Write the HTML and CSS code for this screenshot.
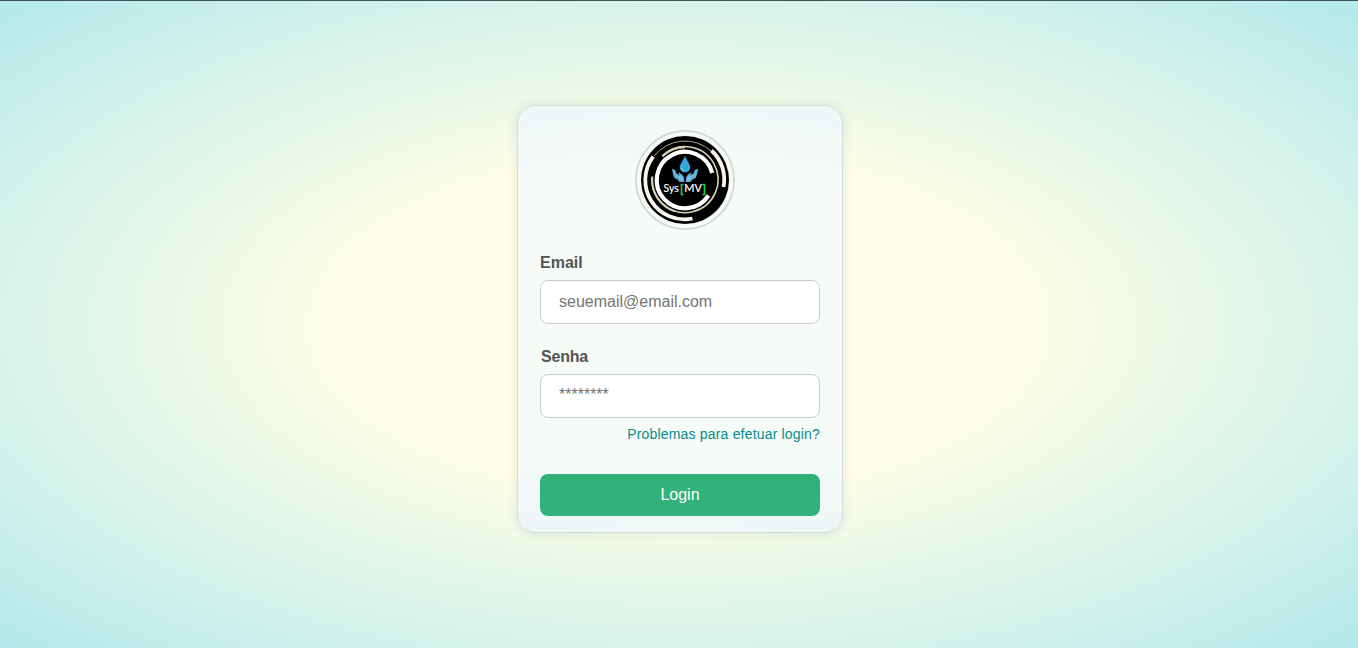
FILE: index.html
```html
<!DOCTYPE html>
<html lang="pt-BR">
<head>
<meta charset="utf-8">
<title>Login</title>
<link rel="stylesheet" href="styles.css">
</head>
<body>
<main class="card">
  <div class="logo">
    <svg class="logo-art" viewBox="0 0 88 88" role="img" aria-label="Sys[MV]">
      <circle cx="44" cy="44" r="44" fill="#000"/>
      <g fill="none">
        <path d="M13.200 20 A39 39 0 0 1 70 15" stroke="#a8a48c" stroke-width="1"/>
        <path d="M21 20 A33 33 0 1 1 11.100 42" stroke="#d8d2b4" stroke-width="1.600"/>
        <path d="M11.300 40.500 A33 33 0 0 0 34 75.400" stroke="#d8d2b4" stroke-width="2"/>
        <path d="M21.500 20.200 A33 33 0 0 1 44 11.200" stroke="#d8d2b4" stroke-width="2"/>
        <path d="M12.200 20.500 A39.200 39.200 0 0 0 51.500 82.500" stroke="#f7f4ea" stroke-width="3.800"/>
        <path d="M70.500 14.500 A39.200 39.200 0 0 1 82.500 51" stroke="#f7f4ea" stroke-width="3.800"/>
        <path d="M71.200 37 A28.200 28.200 0 1 0 67.500 59.500" stroke="#fff" stroke-width="4.200"/>
      </g>
      <path d="M44 19.800 C42.500 24.500 38.800 28 38.800 31.500 A5.200 5.100 0 0 0 49.200 31.500 C49.200 28 45.500 24.500 44 19.800Z" fill="#35a5de"/>
      <path d="M40.600 31.500 Q41 34 43 34.900" fill="none" stroke="#b8e4f7" stroke-width=".8"/>
      <g id="hand">
        <path d="M31 32.800 L34.200 34 L35.700 38 L38.800 40.200 Q36.500 37.200 37.700 36.600 Q41.800 38.200 42.900 41.200 L43.200 46 L38.700 46 Q37 43 33.500 42 Q31.500 38.500 31 32.800Z" fill="#5fb3df"/>
        <path d="M35.500 38.200 L39.500 41.200 L41 44.200" fill="none" stroke="#b5d5e5" stroke-width=".7"/>
      </g>
      <use href="#hand" transform="matrix(-1 0 0 1 88 0)"/>
      <g class="logo-text">
        <text x="22.500" y="56.300" textLength="15.300" lengthAdjust="spacingAndGlyphs">Sys</text>
        <text class="bracket" x="38.900" y="56.500">[</text>
        <text x="43.300" y="56.300" textLength="17.700" lengthAdjust="spacingAndGlyphs">MV</text>
        <text class="bracket" x="61.600" y="56.500">]</text>
      </g>
    </svg>
  </div>
  <form class="form">
    <label class="label" for="email">Email</label>
    <input class="field" id="email" type="email" placeholder="seuemail@email.com">
    <label class="label label-password" for="senha">Senha</label>
    <input class="field field-password" id="senha" type="password" placeholder="********">
    <a class="help">Problemas para efetuar login?</a>
    <button class="submit" type="button">Login</button>
  </form>
</main>
</body>
</html>
```
FILE: styles.css
```css
* { box-sizing: border-box; }
body {
  margin: 0;
  height: 648px;
  padding-top: 104px;
  border-top: 1px solid #3d5555;
  font-family: Arial, "Liberation Sans", sans-serif;
  background: radial-gradient(ellipse at center, #fffee8 36%, #b4e9eb 100%);
  overflow: hidden;
}
.card {
  display: flex;
  flex-direction: column;
  width: 326px;
  height: 428px;
  margin-left: 517px;
  padding: 24px 22px 16px;
  border: 1px solid #d5dddd;
  border-radius: 18px;
  background: radial-gradient(960px 458px at center, #f6fbf7 32%, #eef7f8 48%);
  box-shadow: 0 0 12px rgba(0, 0, 0, .1);
}
.logo {
  display: grid;
  place-items: center;
  width: 100px;
  height: 100px;
  margin-left: 95px;
  border: 2px solid #d4dbd7;
  border-radius: 50%;
}
.logo-art { width: 88px; height: 88px; }
.logo-text {
  font-family: Lato, sans-serif;
  font-size: 10.5px;
  fill: #fff;
  stroke: #fff;
  stroke-width: .15px;
}
.logo-text .bracket { fill: #10d848; stroke: #10d848; stroke-width: .6px; font-size: 11.5px; }
.form { display: flex; flex-direction: column; padding-top: 24px; }
.label {
  height: 18px;
  margin-bottom: 8px;
  font-size: 16px;
  font-weight: 700;
  line-height: 18px;
  color: #555;
}
.label-password { margin-top: 24px; padding-left: 1px; letter-spacing: -.2px; }
.field {
  width: 280px;
  height: 44px;
  padding: 0 18px;
  border: 1px solid #ccc;
  border-radius: 8px;
  background: #fff;
  font: 16px Arial, "Liberation Sans", sans-serif;
}
.field-password { padding-bottom: 2px; }
.field::placeholder { color: #757575; }
.help {
  align-self: flex-end;
  height: 16px;
  margin-top: 8px;
  font-size: 14px;
  line-height: 16px;
  letter-spacing: .18px;
  color: #068b8b;
}
.submit {
  height: 42px;
  margin-top: 32px;
  border: 0;
  border-radius: 8px;
  background: #32b27b;
  color: #fff;
  font: 16px Arial, "Liberation Sans", sans-serif;
}
```
